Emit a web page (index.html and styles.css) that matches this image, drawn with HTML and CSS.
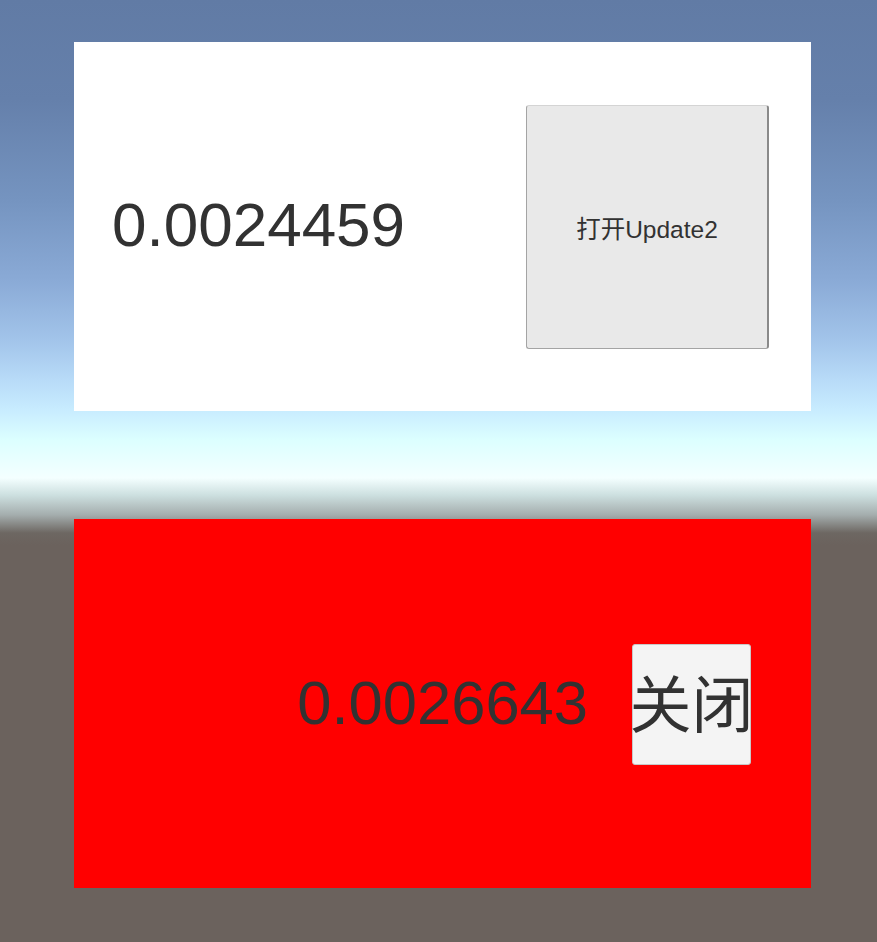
FILE: index.html
```html
<!DOCTYPE html>
<html lang="zh">
<head>
<meta charset="utf-8">
<title>Update Test</title>
<link rel="stylesheet" href="styles.css">
</head>
<body>
<div class="scene">
  <section class="panel panel-white">
    <div class="value value-top">0.0024459</div>
    <button class="btn btn-open">打开Update2</button>
  </section>
  <section class="panel panel-red">
    <div class="value value-bottom">0.0026643</div>
    <button class="btn btn-close">关闭</button>
  </section>
</div>
</body>
</html>
```

FILE: styles.css
```css
html, body {
  margin: 0;
  padding: 0;
}
body {
  width: 877px;
  height: 942px;
  overflow: hidden;
  font-family: "Liberation Sans", "Noto Sans CJK SC", sans-serif;
  background: linear-gradient(to bottom,
    #617ba5 0px,
    #6580ab 100px,
    #7594c0 200px,
    #8aaad6 280px,
    #a2c4ea 340px,
    #b8dbf8 380px,
    #c8ecff 410px,
    #dcffff 440px,
    #f4ffff 478px,
    #cde0e0 495px,
    #a4adad 515px,
    #6d6762 533px,
    #6b625d 545px,
    #6b625d 942px);
}
.scene {
  display: flex;
  flex-direction: column;
  padding: 42px 66px 0 74px;
  gap: 108px;
}
.panel {
  width: 737px;
  height: 369px;
  display: flex;
  align-items: center;
  box-sizing: border-box;
}
.panel-white {
  background: #ffffff;
  padding-left: 38px;
  padding-right: 42px;
  justify-content: space-between;
}
.panel-red {
  background: #ff0000;
  justify-content: flex-end;
  padding-right: 60px;
  gap: 44px;
}
.value {
  font-family: "Liberation Sans", Arial, sans-serif;
  font-size: 62px;
  color: #323232;
  line-height: 1;
}
.value-top {
  margin-top: -4px;
}
.value-bottom {
  font-size: 61.5px;
  margin-top: -1px;
}
.btn {
  box-sizing: border-box;
  padding: 0;
  margin: 0;
  display: flex;
  align-items: center;
  justify-content: center;
  color: #323232;
  font-family: "Liberation Sans", "Noto Sans CJK SC", sans-serif;
  border-radius: 3px;
}
.btn-open {
  width: 243px;
  height: 244px;
  background: #e9e9e9;
  border: 1px solid #a4a4a4;
  border-top-color: #d4d4d4;
  border-right: 2px solid #8a8a8a;
  font-size: 24.5px;
  margin-top: 1px;
  white-space: nowrap;
}
.btn-close {
  width: 119px;
  height: 121px;
  background: #f4f4f4;
  border: 1px solid #c8c8c8;
  font-family: "Noto Sans CJK SC", sans-serif;
  font-size: 62px;
  line-height: 1;
  overflow: visible;
  white-space: nowrap;
  margin-top: 1px;
  padding-bottom: 6px;
}
```
